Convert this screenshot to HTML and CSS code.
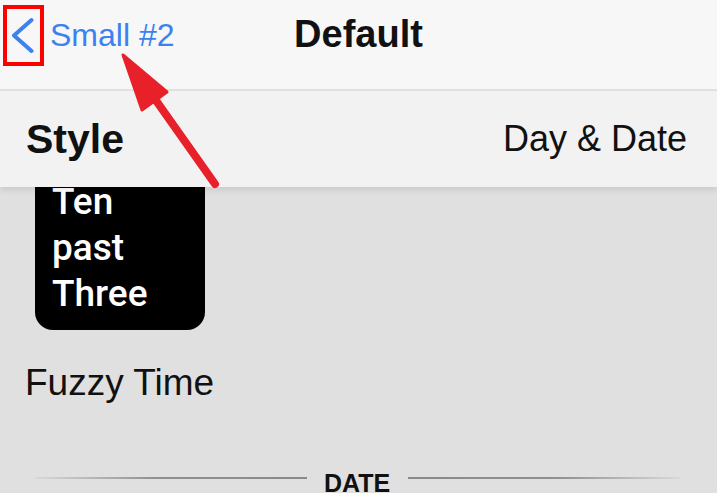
FILE: index.html
```html
<!DOCTYPE html>
<html>
<head>
<meta charset="utf-8">
<link rel="stylesheet" href="styles.css">
</head>
<body>
<div class="screen">
  <nav class="navbar">
    <div class="back">
      <svg class="chev" width="24" height="40" viewBox="0 0 24 40">
        <path d="M21.5 4 L4 19.5 L21.5 35" fill="none" stroke="#3b82f0" stroke-width="4" stroke-linecap="round" stroke-linejoin="round"/>
      </svg>
      <span class="back-label">Small #2</span>
    </div>
    <div class="title">Default</div>
  </nav>
  <header class="style-row">
    <span class="style-label">Style</span>
    <span class="style-value">Day &amp; Date</span>
  </header>
  <main class="content">
    <div class="tile">
      <div class="tile-text">Ten<br>past<br>Three</div>
    </div>
    <div class="face-name">Fuzzy Time</div>
    <div class="section">
      <span class="rule rule-left"></span>
      <span class="section-title">DATE</span>
      <span class="rule rule-right"></span>
    </div>
  </main>
  <div class="highlight-box"></div>
  <svg class="arrow" width="717" height="493" viewBox="0 0 717 493">
    <line x1="215" y1="184" x2="150" y2="92" stroke="#e8202a" stroke-width="8" stroke-linecap="round"/>
    <polygon points="123,55 167,92 142,110" fill="#e8202a" stroke="#e8202a" stroke-width="3" stroke-linejoin="round"/>
  </svg>
</div>
</body>
</html>
```
FILE: styles.css
```css
* { box-sizing: border-box; }
html, body {
  margin: 0;
  padding: 0;
  background: #e0e0e0;
  font-family: "Liberation Sans", Arial, sans-serif;
}
.screen {
  position: relative;
  width: 717px;
  height: 493px;
  overflow: hidden;
  background: #e0e0e0;
}
.navbar {
  height: 91px;
  background: #f7f7f7;
  border-bottom: 2px solid #e2e2e2;
  display: flex;
  align-items: flex-start;
  position: relative;
}
.back {
  display: flex;
  align-items: flex-start;
  padding-left: 10px;
  padding-top: 16px;
}
.chev {
  display: block;
}
.back-label {
  color: #3b82f0;
  font-size: 32px;
  line-height: 36px;
  margin-left: 16px;
  margin-top: 1px;
}
.title {
  position: absolute;
  left: 0;
  right: 0;
  top: 14px;
  text-align: center;
  font-size: 38px;
  font-weight: 700;
  line-height: 40px;
  color: #111;
  pointer-events: none;
}
.style-row {
  height: 96px;
  background: #f2f2f2;
  display: flex;
  align-items: center;
  justify-content: space-between;
  padding: 0 30px 0 26px;
  position: relative;
  z-index: 2;
  box-shadow: 0 3px 6px rgba(0, 0, 0, 0.10);
}
.style-label {
  font-size: 41px;
  font-weight: 700;
  color: #111;
}
.style-value {
  font-size: 36px;
  color: #111;
}
.content {
  display: flex;
  flex-direction: column;
}
.tile {
  width: 170px;
  height: 143px;
  margin-left: 35px;
  background: #000;
  border-radius: 0 0 18px 18px;
  padding-left: 17px;
  overflow: hidden;
  position: relative;
  z-index: 1;
}
.tile-text {
  margin-top: -8px;
  color: #fff;
  font-family: Roboto, "Liberation Sans", sans-serif;
  font-size: 37px;
  font-weight: 500;
  line-height: 46px;
}
.face-name {
  margin-top: 32px;
  margin-left: 25px;
  font-size: 37px;
  line-height: 42px;
  color: #111;
}
.section {
  margin-top: 64px;
  display: flex;
  align-items: flex-start;
  padding: 0 37px 0 35px;
}
.rule {
  flex: 1;
  height: 2px;
  margin-top: 9px;
}
.rule-left {
  background: linear-gradient(to right, rgba(150,150,150,0.1), #8f8f8f 45%, #8a8a8a);
}
.rule-right {
  background: linear-gradient(to right, #8a8a8a, #8f8f8f 55%, rgba(150,150,150,0.1));
}
.section-title {
  font-size: 25px;
  font-weight: 700;
  line-height: 30px;
  color: #111;
  margin: 0 18px 0 17px;
}
.highlight-box {
  position: absolute;
  left: 3px;
  top: 5px;
  width: 41px;
  height: 61px;
  border: 4px solid #ff0000;
  z-index: 5;
}
.arrow {
  position: absolute;
  left: 0;
  top: 0;
  z-index: 6;
}
```
